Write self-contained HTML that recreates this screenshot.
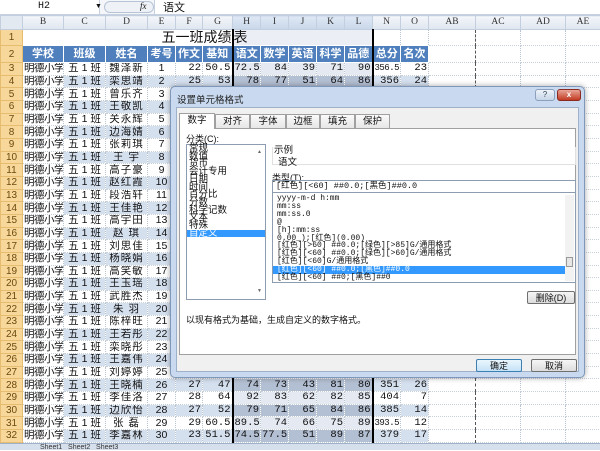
<!DOCTYPE html>
<html><head><meta charset="utf-8">
<style>
*{margin:0;padding:0;box-sizing:border-box}
body{width:600px;height:450px;overflow:hidden;background:#fff;position:relative;font-family:"Liberation Sans","Noto Sans CJK SC",sans-serif;font-size:11px;color:#111}
.abs{position:absolute}
#fb{left:0;top:0;width:600px;height:15px;background:#f4f6f9;border-bottom:1px solid #c5d1e0}
table{position:absolute;left:0;top:15px;border-collapse:collapse;table-layout:fixed;width:600px}
td{border-right:1px dotted #b9c4d2;border-bottom:1px dotted #c8d0da;height:12.67px;font-size:10.5px;line-height:11px;white-space:nowrap;overflow:hidden;text-align:right;padding:0 1px;font-family:"Liberation Mono","Noto Sans CJK SC",sans-serif}
tr.ch td{height:14px;background:linear-gradient(#f3f6fa,#dfe6ef);border:1px solid #c3cede;text-align:center;color:#333;font-size:9.5px;font-family:"Liberation Serif",serif}
tr.ch td.s{background:linear-gradient(#dfe8f4,#c8d7ea)}
td.rh{background:#f8d89a;color:#6d4a10;text-align:center;border:1px solid #e6bd70;font-size:10px;font-family:"Liberation Sans",sans-serif}
td.c{text-align:center;font-family:"Liberation Sans","Noto Sans CJK SC",sans-serif}
td.l{text-align:left;font-family:"Liberation Sans","Noto Sans CJK SC",sans-serif;letter-spacing:-0.5px}
td.t{font-size:9px;letter-spacing:-0.5px}
tr.h td.b{background:#4f7fbd;color:#fff;font-weight:bold;text-align:center;font-family:"Liberation Sans","Noto Sans CJK SC",sans-serif;border:1px solid #fff;font-size:11px}
.e td.sh{background:#d5e0ef}
.e td.sd{background:#b3bfd3}
.o td.sd{background:#e4e9f2}
.nm{letter-spacing:1px}
#dlg{left:170px;top:86px;width:415px;height:292px;background:#c9daf0;border:1px solid #7f97b8;border-radius:5px;box-shadow:0 0 6px rgba(0,0,0,.35)}
#tt{left:6px;top:5px;font-size:9.5px;color:#222}
#body{left:5px;top:20px;width:403px;height:265px;background:#f0f0f0;border:1px solid #9fb1c8}
.tab{position:absolute;top:6px;height:14px;border:1px solid #a0a0a0;border-bottom:none;background:linear-gradient(#fafafa,#e6e6e6);font-size:9.5px;text-align:center;line-height:13px}
#panel{left:2px;top:20px;width:397px;height:227px;background:#fff;border:1px solid #a0a0a0}
.sm{font-size:9px;position:absolute;white-space:nowrap}
#cat{left:6px;top:15px;width:80px;height:156px;border:1px solid #8e9cb0;background:#fff}
#cat div{font-size:9.5px;line-height:7.7px;padding-left:2px;white-space:nowrap}
#types{left:92px;top:63px;width:304px;height:91px;border:1px solid #8e9cb0;background:#fff}
#types div{font-size:8px;line-height:7.9px;padding-left:4px;white-space:nowrap;font-family:"Liberation Mono","Noto Sans CJK SC",monospace}
.btn{position:absolute;border:1px solid #707070;border-radius:2px;background:linear-gradient(#f6f6f6,#dcdcdc);font-size:9px;text-align:center;line-height:12px}
</style></head><body>
<div id="fb" class="abs">
 <div class="abs" style="left:0;top:0;width:100px;height:14px;background:#fff;border-right:1px solid #c5d1e0;font-size:10px;line-height:14px;padding-left:38px;font-family:'Liberation Mono',monospace">H2</div>
 <div class="abs" style="left:95px;top:3px;font-size:7px">▼</div>
 <div class="abs" style="left:104px;top:1px;width:50px;height:12px;border-radius:6px;border:1px solid #b6c4d6;background:#eef2f7"></div>
 <div class="abs" style="left:140px;top:1px;font-size:9px;font-style:italic;font-family:'Liberation Serif',serif">fx</div>
 <div class="abs" style="left:154px;top:0;width:446px;height:14px;background:#fff;border-left:1px solid #c5d1e0;font-size:11px;line-height:14px;padding-left:8px;font-family:'Noto Sans CJK SC',sans-serif">语文</div>
</div>
<table>
<colgroup><col style="width:22px"><col style="width:41px"><col style="width:42px"><col style="width:42px"><col style="width:28px"><col style="width:27px"><col style="width:30px"><col style="width:28px"><col style="width:28px"><col style="width:28px"><col style="width:28px"><col style="width:28px"><col style="width:28px"><col style="width:28px"><col style="width:47px"><col style="width:45px"><col style="width:45px"><col style="width:35px"></colgroup>
<tr class="ch"><td style="background:#e3e9f1"></td><td>B</td><td>C</td><td>D</td><td>E</td><td>F</td><td>G</td><td class="s">H</td><td class="s">I</td><td class="s">J</td><td class="s">K</td><td class="s">L</td><td>N</td><td>O</td><td>AB</td><td style="border-left:1px dashed #555">AC</td><td>AD</td><td>AE</td></tr>
<tr style="height:16px"><td class="rh">1</td><td colspan="6" style="text-align:right;font-size:14px;font-family:'Noto Sans CJK SC',sans-serif;border-bottom:none;border-right:none;padding-right:0">五一班成绩</td><td colspan="5" style="text-align:left;font-size:14px;font-family:'Noto Sans CJK SC',sans-serif;background:#eceef5;border-left:2px solid #000;border-right:2px solid #000;border-bottom:none;padding-left:0">表</td><td></td><td></td><td></td><td style="border-left:1px dashed #555"></td><td></td><td></td></tr>
<tr class="h" style="height:17px"><td class="rh">2</td><td class="b">学校</td><td class="b">班级</td><td class="b">姓名</td><td class="b">考号</td><td class="b">作文</td><td class="b">基知</td><td class="b" style="border-left:2px solid #000">语文</td><td class="b">数学</td><td class="b">英语</td><td class="b">科学</td><td class="b" style="border-right:2px solid #000">品德</td><td class="b">总分</td><td class="b">名次</td><td></td><td style="border-left:1px dashed #555"></td><td></td><td></td></tr>
<tr class="o"><td class="rh">3</td><td class="l">明德小学</td><td class="c">五 1 班</td><td class="c nm">魏泽新</td><td class="c">1</td><td>22</td><td>50.5</td><td class="sd" style="border-left:2px solid #000">72.5</td><td class="sd">84</td><td class="sd">39</td><td class="sd">71</td><td class="sd" style="border-right:2px solid #000">90</td><td class="t">356.5</td><td>23</td><td></td><td style="border-left:1px dashed #555"></td><td></td><td></td></tr>
<tr class="e"><td class="rh">4</td><td class="l">明德小学</td><td class="c sh">五 1 班</td><td class="c nm sh">栾思靖</td><td class="c sh">2</td><td class="sh">25</td><td class="sh">53</td><td class="sd" style="border-left:2px solid #000">78</td><td class="sd">77</td><td class="sd">51</td><td class="sd">64</td><td class="sd" style="border-right:2px solid #000">86</td><td class="sh">356</td><td class="sh">24</td><td></td><td style="border-left:1px dashed #555"></td><td></td><td></td></tr>
<tr class="o"><td class="rh">5</td><td class="l">明德小学</td><td class="c">五 1 班</td><td class="c nm">曾乐齐</td><td class="c">3</td><td colspan="13"></td></tr>
<tr class="e"><td class="rh">6</td><td class="l">明德小学</td><td class="c sh">五 1 班</td><td class="c nm sh">王敬凯</td><td class="c sh">4</td><td colspan="13"></td></tr>
<tr class="o"><td class="rh">7</td><td class="l">明德小学</td><td class="c">五 1 班</td><td class="c nm">关永辉</td><td class="c">5</td><td colspan="13"></td></tr>
<tr class="e"><td class="rh">8</td><td class="l">明德小学</td><td class="c sh">五 1 班</td><td class="c nm sh">边海婧</td><td class="c sh">6</td><td colspan="13"></td></tr>
<tr class="o"><td class="rh">9</td><td class="l">明德小学</td><td class="c">五 1 班</td><td class="c nm">张莉琪</td><td class="c">7</td><td colspan="13"></td></tr>
<tr class="e"><td class="rh">10</td><td class="l">明德小学</td><td class="c sh">五 1 班</td><td class="c nm sh">王 宇</td><td class="c sh">8</td><td colspan="13"></td></tr>
<tr class="o"><td class="rh">11</td><td class="l">明德小学</td><td class="c">五 1 班</td><td class="c nm">高子豪</td><td class="c">9</td><td colspan="13"></td></tr>
<tr class="e"><td class="rh">12</td><td class="l">明德小学</td><td class="c sh">五 1 班</td><td class="c nm sh">赵红霞</td><td class="c sh">10</td><td colspan="13"></td></tr>
<tr class="o"><td class="rh">13</td><td class="l">明德小学</td><td class="c">五 1 班</td><td class="c nm">段浩轩</td><td class="c">11</td><td colspan="13"></td></tr>
<tr class="e"><td class="rh">14</td><td class="l">明德小学</td><td class="c sh">五 1 班</td><td class="c nm sh">王佳艳</td><td class="c sh">12</td><td colspan="13"></td></tr>
<tr class="o"><td class="rh">15</td><td class="l">明德小学</td><td class="c">五 1 班</td><td class="c nm">高宇田</td><td class="c">13</td><td colspan="13"></td></tr>
<tr class="e"><td class="rh">16</td><td class="l">明德小学</td><td class="c sh">五 1 班</td><td class="c nm sh">赵 琪</td><td class="c sh">14</td><td colspan="13"></td></tr>
<tr class="o"><td class="rh">17</td><td class="l">明德小学</td><td class="c">五 1 班</td><td class="c nm">刘思佳</td><td class="c">15</td><td colspan="13"></td></tr>
<tr class="e"><td class="rh">18</td><td class="l">明德小学</td><td class="c sh">五 1 班</td><td class="c nm sh">杨晓娟</td><td class="c sh">16</td><td colspan="13"></td></tr>
<tr class="o"><td class="rh">19</td><td class="l">明德小学</td><td class="c">五 1 班</td><td class="c nm">高笑敏</td><td class="c">17</td><td colspan="13"></td></tr>
<tr class="e"><td class="rh">20</td><td class="l">明德小学</td><td class="c sh">五 1 班</td><td class="c nm sh">王玉瑶</td><td class="c sh">18</td><td colspan="13"></td></tr>
<tr class="o"><td class="rh">21</td><td class="l">明德小学</td><td class="c">五 1 班</td><td class="c nm">武胜杰</td><td class="c">19</td><td colspan="13"></td></tr>
<tr class="e"><td class="rh">22</td><td class="l">明德小学</td><td class="c sh">五 1 班</td><td class="c nm sh">朱 羽</td><td class="c sh">20</td><td colspan="13"></td></tr>
<tr class="o"><td class="rh">23</td><td class="l">明德小学</td><td class="c">五 1 班</td><td class="c nm">陈梓旺</td><td class="c">21</td><td colspan="13"></td></tr>
<tr class="e"><td class="rh">24</td><td class="l">明德小学</td><td class="c sh">五 1 班</td><td class="c nm sh">王若彤</td><td class="c sh">22</td><td colspan="13"></td></tr>
<tr class="o"><td class="rh">25</td><td class="l">明德小学</td><td class="c">五 1 班</td><td class="c nm">栾晓彤</td><td class="c">23</td><td colspan="13"></td></tr>
<tr class="e"><td class="rh">26</td><td class="l">明德小学</td><td class="c sh">五 1 班</td><td class="c nm sh">王嘉伟</td><td class="c sh">24</td><td colspan="13"></td></tr>
<tr class="o"><td class="rh">27</td><td class="l">明德小学</td><td class="c">五 1 班</td><td class="c nm">刘婷婷</td><td class="c">25</td><td colspan="13"></td></tr>
<tr class="e"><td class="rh">28</td><td class="l">明德小学</td><td class="c sh">五 1 班</td><td class="c nm sh">王晓楠</td><td class="c sh">26</td><td class="sh">27</td><td class="sh">47</td><td class="sd" style="border-left:2px solid #000">74</td><td class="sd">73</td><td class="sd">43</td><td class="sd">81</td><td class="sd" style="border-right:2px solid #000">80</td><td class="sh">351</td><td class="sh">26</td><td></td><td style="border-left:1px dashed #555"></td><td></td><td></td></tr>
<tr class="o"><td class="rh">29</td><td class="l">明德小学</td><td class="c">五 1 班</td><td class="c nm">李佳洛</td><td class="c">27</td><td>28</td><td>64</td><td class="sd" style="border-left:2px solid #000">92</td><td class="sd">83</td><td class="sd">62</td><td class="sd">82</td><td class="sd" style="border-right:2px solid #000">85</td><td>404</td><td>7</td><td></td><td style="border-left:1px dashed #555"></td><td></td><td></td></tr>
<tr class="e"><td class="rh">30</td><td class="l">明德小学</td><td class="c sh">五 1 班</td><td class="c nm sh">边欣怡</td><td class="c sh">28</td><td class="sh">27</td><td class="sh">52</td><td class="sd" style="border-left:2px solid #000">79</td><td class="sd">71</td><td class="sd">65</td><td class="sd">84</td><td class="sd" style="border-right:2px solid #000">86</td><td class="sh">385</td><td class="sh">14</td><td></td><td style="border-left:1px dashed #555"></td><td></td><td></td></tr>
<tr class="o"><td class="rh">31</td><td class="l">明德小学</td><td class="c">五 1 班</td><td class="c nm">张 磊</td><td class="c">29</td><td>29</td><td>60.5</td><td class="sd" style="border-left:2px solid #000">89.5</td><td class="sd">74</td><td class="sd">66</td><td class="sd">75</td><td class="sd" style="border-right:2px solid #000">89</td><td class="t">393.5</td><td>12</td><td></td><td style="border-left:1px dashed #555"></td><td></td><td></td></tr>
<tr class="e"><td class="rh">32</td><td class="l">明德小学</td><td class="c sh">五 1 班</td><td class="c nm sh">李嘉林</td><td class="c sh">30</td><td class="sh">23</td><td class="sh">51.5</td><td class="sd" style="border-left:2px solid #000">74.5</td><td class="sd">77.5</td><td class="sd">51</td><td class="sd">89</td><td class="sd" style="border-right:2px solid #000">87</td><td class="sh">379</td><td class="sh">17</td><td></td><td style="border-left:1px dashed #555"></td><td></td><td></td></tr>
</table>
<div class="abs" style="left:0;top:443px;width:600px;height:7px;background:#d6e0ec;border-top:1px solid #9fb1c8;font-size:7px;line-height:7px;padding-left:40px;color:#333">Sheet1 &nbsp; Sheet2 &nbsp; Sheet3</div>

<div id="dlg" class="abs">
 <div id="tt" class="abs">设置单元格格式</div>
 <div class="abs" style="left:364px;top:2px;width:20px;height:12px;border:1px solid #8aa0bd;border-radius:3px;background:linear-gradient(#eef3f9,#c7d6e8);font-size:8px;text-align:center;line-height:10px;color:#345">?</div>
 <div class="abs" style="left:386px;top:2px;width:24px;height:12px;border:1px solid #8b2a20;border-radius:3px;background:linear-gradient(#e8a496,#c23b22);font-size:8px;text-align:center;line-height:10px;color:#fff;font-weight:bold">x</div>
 <div id="body" class="abs">
  <div class="tab" style="left:2px;top:5px;height:16px;width:36px;background:#fff;z-index:2">数字</div>
  <div class="tab" style="left:38px;width:35px">对齐</div>
  <div class="tab" style="left:73px;width:36px">字体</div>
  <div class="tab" style="left:109px;width:34px">边框</div>
  <div class="tab" style="left:143px;width:35px">填充</div>
  <div class="tab" style="left:178px;width:35px">保护</div>
  <div id="panel" class="abs">
   <div class="sm" style="left:6px;top:3px">分类(C):</div>
   <div id="cat" class="abs">
    <div>常规</div><div>数值</div><div>货币</div><div>会计专用</div><div>日期</div><div>时间</div><div>百分比</div><div>分数</div><div>科学记数</div><div>文本</div><div>特殊</div><div style="background:#3399ff;color:#fff">自定义</div>
    <div class="abs" style="right:3px;top:4px;font-size:5px;color:#666">▲</div>
    <div class="abs" style="right:3px;bottom:3px;font-size:5px;color:#666">▼</div>
   </div>
   <div class="sm" style="left:94px;top:13px;font-size:9.5px">示例</div>
   <div class="abs" style="left:92px;top:18px;width:304px;height:18px;border:1px solid #e0e0e0;border-top:none"></div>
   <div class="sm" style="left:98px;top:25px;font-size:9.5px">语文</div>
   <div class="sm" style="left:92px;top:42px">类型(T):</div>
   <div class="abs" style="left:92px;top:51px;width:304px;height:13px;border:1px solid #8e9cb0;font-size:8.5px;line-height:11px;padding-left:3px;font-family:'Liberation Mono','Noto Sans CJK SC',monospace">[红色][&lt;60] ##0.0;[黑色]##0.0</div>
   <div id="types" class="abs">
    <div style="margin-top:2px">yyyy-m-d h:mm</div><div>mm:ss</div><div>mm:ss.0</div><div>@</div><div>[h]:mm:ss</div><div>0.00_);[红色](0.00)</div><div>[红色][&gt;60] ##0.0;[绿色][&gt;85]G/通用格式</div><div>[红色][&lt;60] ##0.0;[绿色][&gt;60]G/通用格式</div><div>[红色][&lt;60]G/通用格式</div><div style="background:#3399ff;color:#fff;margin-right:9px">[红色][&lt;60] ##0.0;[黑色]##0.0</div><div>[红色][&lt;60] ##0;[黑色]##0</div>
    <div class="abs" style="right:1px;top:2px;width:9px;height:86px;background:#f2f2f2"></div>
    <div class="abs" style="right:2px;top:64px;width:7px;height:10px;border:1px solid #999;background:#e6e6e6"></div>
   </div>
   <div class="btn" style="left:347px;top:162px;width:48px;height:13px">删除(D)</div>
   <div class="sm" style="left:6px;top:184px">以现有格式为基础，生成自定义的数字格式。</div>
  </div>
  <div class="btn" style="left:299px;top:251px;width:46px;height:13px;border-color:#3c7fb1;background:linear-gradient(#eaf6fd,#c5e2f7)">确定</div>
  <div class="btn" style="left:354px;top:251px;width:46px;height:13px">取消</div>
 </div>
</div>
</body></html>
